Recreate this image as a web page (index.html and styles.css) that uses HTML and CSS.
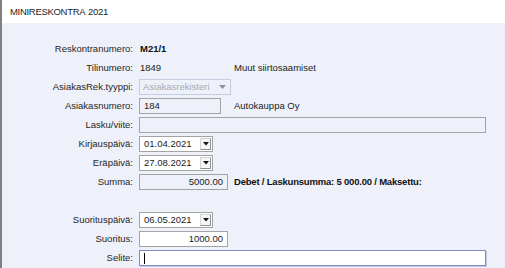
FILE: index.html
```html
<!DOCTYPE html>
<html lang="fi">
<head>
    <meta charset="UTF-8">
    <meta name="viewport" content="width=device-width, initial-scale=1.0">
    <title>MINIRESKONTRA 2021</title>
    <link rel="stylesheet" href="styles.css">
</head>
<body>
    <div class="window">
        <div class="titlebar">MINIRESKONTRA 2021</div>

        <div class="panel">
            <div class="form">
                <div class="lbl">Reskontranumero:</div>
                <div class="val bold">M21/1</div>
                <div></div>

                <div class="lbl">Tilinumero:</div>
                <div class="val">1849</div>
                <div class="extra">Muut siirtosaamiset</div>

                <div class="lbl">AsiakasRek.tyyppi:</div>
                <div class="combo disabled">
                    <span>Asiakasrekisteri</span>
                    <svg class="combo-arrow" width="7" height="4" viewBox="0 0 7 4"><polygon points="0,0 7,0 3.5,4" fill="#8d929c"/></svg>
                </div>
                <div></div>

                <div class="lbl">Asiakasnumero:</div>
                <div class="field readonly short">184</div>
                <div class="extra">Autokauppa Oy</div>

                <div class="lbl">Lasku/viite:</div>
                <div class="field readonly wide"></div>

                <div class="lbl">Kirjauspäivä:</div>
                <div class="date">
                    <span>01.04.2021</span>
                    <span class="date-btn"><svg width="6" height="4" viewBox="0 0 6 4"><polygon points="0,0 6,0 3,3.5" fill="#111"/></svg></span>
                </div>
                <div></div>

                <div class="lbl">Eräpäivä:</div>
                <div class="date">
                    <span>27.08.2021</span>
                    <span class="date-btn"><svg width="6" height="4" viewBox="0 0 6 4"><polygon points="0,0 6,0 3,3.5" fill="#111"/></svg></span>
                </div>
                <div></div>

                <div class="lbl">Summa:</div>
                <div class="field readonly num">5000.00</div>
                <div class="extra bold tight">Debet / Laskunsumma: 5 000.00 / Maksettu:</div>

                <div class="spacer"></div>

                <div class="lbl">Suorituspäivä:</div>
                <div class="date">
                    <span>06.05.2021</span>
                    <span class="date-btn"><svg width="6" height="4" viewBox="0 0 6 4"><polygon points="0,0 6,0 3,3.5" fill="#111"/></svg></span>
                </div>
                <div></div>

                <div class="lbl">Suoritus:</div>
                <div class="field num">1000.00</div>
                <div></div>

                <div class="lbl">Selite:</div>
                <div class="field wide focus"><span class="caret"></span></div>
            </div>
        </div>
    </div>
</body>
</html>
```

FILE: styles.css
```css
body {
    margin: 0;
    padding: 0;
    font-family: "Liberation Sans", Arial, sans-serif;
    font-size: 9.5px;
    color: #222;
    background-color: #eef1f9;
}
.window {
    width: 505px;
    height: 268px;
    overflow: hidden;
    box-sizing: border-box;
    border-left: 2px solid #7f7f7f;
    display: flex;
    flex-direction: column;
}
.titlebar {
    height: 23px;
    flex-shrink: 0;
    background-color: #ffffff;
    padding-left: 8px;
    line-height: 24px;
    font-size: 9.5px;
    letter-spacing: -0.3px;
    word-spacing: 1px;
    color: #1e1e1e;
}
.panel {
    flex: 1;
    background-color: #eef1f9;
    padding: 18px 19px 0 0;
}
.form {
    display: grid;
    grid-template-columns: 131px 89px 1fr;
    grid-auto-rows: 16px;
    column-gap: 6px;
    row-gap: 3px;
}
.lbl {
    text-align: right;
    line-height: 16px;
    color: #262626;
}
.val {
    padding-left: 1px;
    line-height: 16px;
}
.extra {
    line-height: 16px;
    white-space: nowrap;
}
.bold {
    font-weight: bold;
    color: #111;
}
.tight {
    letter-spacing: -0.2px;
}
.spacer {
    grid-column: 1 / -1;
}
.field {
    box-sizing: border-box;
    height: 16px;
    border: 1px solid #a3a3a3;
    background-color: #ffffff;
    padding: 0 4px;
    line-height: 14px;
    white-space: nowrap;
}
.field.readonly {
    background-color: #eef1f9;
}
.field.short {
    width: 82px;
}
.field.wide {
    grid-column: 2 / 4;
}
.field.num {
    text-align: right;
}
.field.focus {
    border-color: #7d8cc4;
    box-shadow: 1px 1px 0 #c3cae6;
    display: flex;
    align-items: center;
}
.caret {
    display: inline-block;
    width: 1px;
    height: 11px;
    background-color: #000;
}
.combo {
    box-sizing: border-box;
    width: 92px;
    height: 16px;
    border: 1px solid #c7cde0;
    padding: 0 3px;
    display: flex;
    align-items: center;
    justify-content: space-between;
    line-height: 14px;
}
.combo.disabled {
    color: #a4aab6;
}
.combo-arrow {
    margin-right: 1px;
}
.date {
    box-sizing: border-box;
    width: 74px;
    height: 16px;
    border: 1px solid #a3a3a3;
    background-color: #ffffff;
    padding: 0 1px 0 4px;
    display: flex;
    align-items: center;
    justify-content: space-between;
    line-height: 14px;
}
.date-btn {
    box-sizing: border-box;
    width: 11px;
    height: 12px;
    border: 1px solid #d4d4d4;
    border-right-color: #8f8f8f;
    border-bottom-color: #8f8f8f;
    background-color: #f6f6f6;
    display: flex;
    align-items: center;
    justify-content: center;
}
```
